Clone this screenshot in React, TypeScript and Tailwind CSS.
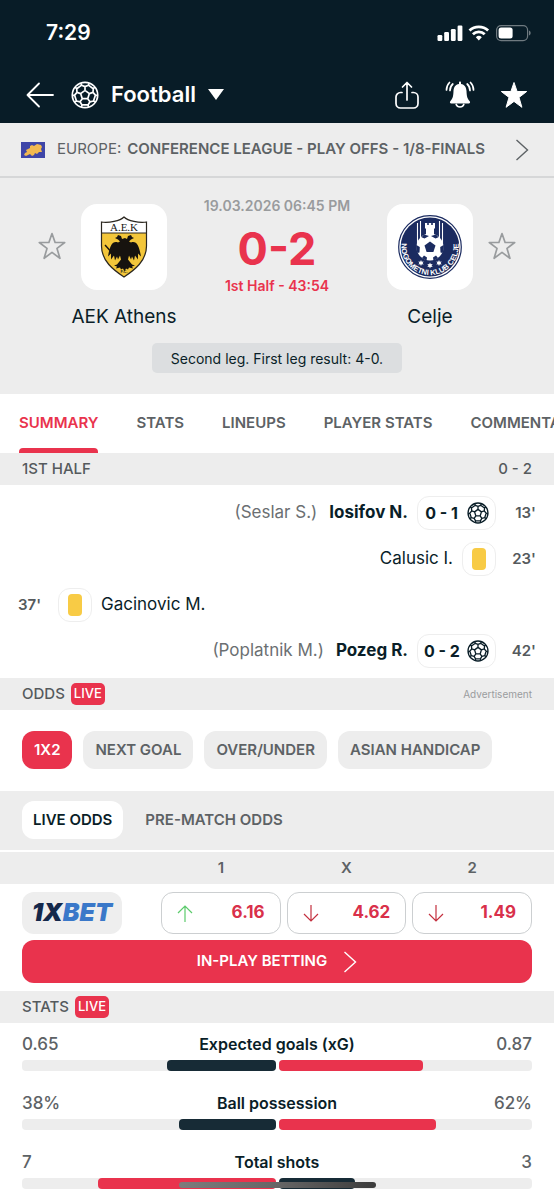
import React from 'react';

const SUMMARY_TABS = ['SUMMARY', 'STATS', 'LINEUPS', 'PLAYER STATS', 'COMMENTARY'];
const MARKETS = ['1X2', 'NEXT GOAL', 'OVER/UNDER', 'ASIAN HANDICAP'];

const ODDS = [
  { label: '1', value: '6.16', up: true },
  { label: 'X', value: '4.62', up: false },
  { label: '2', value: '1.49', up: false },
];

const STATS = [
  { name: 'Expected goals (xG)', home: '0.65', away: '0.87', homePct: 43, awayPct: 57 },
  { name: 'Ball possession', home: '38%', away: '62%', homePct: 38, awayPct: 62 },
  { name: 'Total shots', home: '7', away: '3', homePct: 70, awayPct: 30 },
];

const polar = (r: number, deg: number) => {
  const a = (deg * Math.PI) / 180;
  return `${(14 + r * Math.cos(a)).toFixed(2)} ${(14 + r * Math.sin(a)).toFixed(2)}`;
};

const SEAMS = [-90, -18, 54, 126, 198]
  .map(
    (a) =>
      `M${polar(4.6, a)}L${polar(4.6, a + 72)}M${polar(4.6, a)}L${polar(8.4, a)}` +
      `M${polar(12.6, a - 20)}L${polar(10.4, a - 19)}L${polar(8.4, a)}L${polar(10.4, a + 19)}L${polar(12.6, a + 20)}` +
      `M${polar(10.4, a + 19)}L${polar(10.4, a + 53)}`
  )
  .join('');

const Ball: React.FC<{ className: string }> = ({ className }) => (
  <svg viewBox="0 0 28 28" className={className} fill="none" stroke="currentColor" strokeWidth="1.7" strokeLinejoin="round" aria-hidden="true">
    <circle cx="14" cy="14" r="12.7" />
    <path d={SEAMS} />
  </svg>
);

const Star: React.FC<{ className: string; filled?: boolean }> = ({ className, filled }) => (
  <svg
    viewBox="0 0 28 28"
    className={className}
    fill={filled ? 'currentColor' : 'none'}
    stroke="currentColor"
    strokeWidth={filled ? 1 : 1.7}
    strokeLinejoin="round"
    aria-hidden="true"
  >
    <path d="M14 1.5l3.1 9h9.600l-7.700 5.900 2.900 9.900-7.900-5.900-7.900 5.900L9 16.400 1.300 10.500h9.600z" />
  </svg>
);

const Chevron: React.FC = () => (
  <svg viewBox="0 0 14 22" className="h-[22px] w-[14px]" fill="none" stroke="currentColor" strokeWidth="1.4" aria-hidden="true">
    <path d="M1.5 1l11 10-11 10" />
  </svg>
);

const StatusIcons: React.FC = () => (
  <svg viewBox="0 0 96 18" className="h-[18px] w-24" fill="#fff" aria-hidden="true">
    <rect x="1.5" y="11" width="4.8" height="6" rx="1.2" />
    <rect x="8.2" y="8" width="4.8" height="9" rx="1.2" />
    <rect x="14.900" y="5" width="4.800" height="12" rx="1.200" />
    <rect x="21.600" y="1.500" width="4.800" height="15.500" rx="1.200" />
    <g fill="none" stroke="#fff" strokeWidth="2.8">
      <path d="M33.500 6.500a13.500 13.500 0 0118.600 0" />
      <path d="M36.900 10.200a8.500 8.500 0 0111.800 0" />
    </g>
    <path d="M39.800 13.200a4.500 4.500 0 016 0l-3 3.300z" />
    <rect x="60.600" y="1.600" width="31" height="15" rx="4.500" fill="none" stroke="#6f7a80" strokeWidth="1.200" />
    <rect x="62.600" y="3.600" width="14" height="11" rx="2.500" />
    <path d="M93 6.500v5c2.200-.8 2.200-4.200 0-5z" fill="#6f7a80" />
  </svg>
);

const AekCrest: React.FC = () => (
  <svg viewBox="0 0 48 62" className="h-[62px] w-12" role="img" aria-label="AEK Athens">
    <path d="M24 1C20 5 9 7 1.500 6v24c0 15 12 24 22.500 31 10.500-7 22.500-16 22.500-31V6C39 7 28 5 24 1z" fill="#f3c63a" />
    <path d="M24 1C20 5 9 7 1.500 6v11h45V6C39 7 28 5 24 1z" fill="#fff" />
    <path d="M24 1C20 5 9 7 1.500 6v24c0 15 12 24 22.500 31 10.500-7 22.500-16 22.500-31V6C39 7 28 5 24 1z" fill="none" stroke="#2b2721" strokeWidth="1.200" />
    <path d="M1.500 17h45" stroke="#2b2721" strokeWidth="1" />
    <text x="24" y="15" textAnchor="middle" fontFamily="Liberation Serif, serif" fontSize="11" fill="#1a1815">
      A.E.K
    </text>
    <path
      d="M22 23l-1-3-3-1-1 2-2 1 3 1.500 2 2-2 1c-5-2-8 2-10 14l3-3 0 6 3-4 1 5 2-4 1 3 2-4 1 4-4 5-3 1 3 1-1 2 4-1 1 2 2-1 1.500 3 1.500-3 2 1 1-2 4 1-1-2 3-1-3-1-4-5 1-4 2 4 1-3 2 4 1-5 3 4 0-6 3 3c-2-12-5-16-10-14l-2-1 2-2 3-1.500-2-1-1-2-3 1-1 3-2-1z"
      fill="#17130f"
    />
    <path d="M5 29l9 10" stroke="#17130f" strokeWidth="1.400" />
    <text x="24" y="57" textAnchor="middle" fontFamily="Liberation Sans, sans-serif" fontSize="4" fontWeight="700" fill="#2b2721">
      F.C.
    </text>
  </svg>
);

const CeljeCrest: React.FC = () => (
  <svg viewBox="0 0 64 64" className="h-16 w-16" role="img" aria-label="NK Celje">
    <circle cx="32" cy="32" r="31.300" fill="#fff" stroke="#1b2b60" strokeWidth="1.200" />
    <circle cx="32" cy="32" r="29.400" fill="#1b2b60" />
    <path d="M19.500 8v23M22.500 6v23M41.500 6v23M44.500 8v23" stroke="#fff" strokeWidth="1.100" />
    <path d="M27 8h2.200v2h1.600V8h2.400v2h1.600V8H37v5l-1 1v7h-8v-7l-1-1z" fill="#fff" />
    <circle cx="32" cy="32" r="13.500" fill="#fff" />
    <path d="M32 26.500l5.500 4-2.100 6.500h-6.800l-2.100-6.500zM26 19.500l5 1.500-4.500 2.500-3-1.200zM38 19.500l-5 1.500 4.500 2.500 3-1.200zM18.300 30l3.500 2-.3 5.500-2 .5a14 14 0 01-1.200-8zM45.700 30l-3.500 2 .3 5.500 2 .5a14 14 0 001.200-8zM26 40.500l3 2-.5 3c-1.500-.5-3-1.300-4.500-2.500zM38 40.500l-3 2 .5 3c1.500-.5 3-1.300 4.500-2.500z" fill="#1b2b60" />
    <g fill="#fff">
      <path d="M23 45l.8 1.700 1.900-.2-1.100 1.500 1.100 1.500-1.900-.2L23 51l-.8-1.700-1.900.2 1.100-1.500-1.100-1.500 1.900.2z" />
      <path d="M32 47.500l.8 1.700 1.900-.2-1.100 1.500 1.100 1.500-1.900-.2-.8 1.700-.8-1.700-1.900.2 1.100-1.500-1.100-1.500 1.900.2z" />
      <path d="M41 45l.8 1.700 1.900-.2-1.100 1.500 1.100 1.500-1.900-.2L41 51l-.8-1.700-1.900.2 1.100-1.500-1.100-1.500 1.900.2z" />
    </g>
    <path id="celje-ring" d="M5 22A28.600 28.600 0 1059 22" fill="none" />
    <text fontFamily="Liberation Sans, sans-serif" fontSize="7.500" fontWeight="700" fill="#fff">
      <textPath href="#celje-ring" startOffset="50%" textAnchor="middle">
        NOGOMETNI KLUB CELJE
      </textPath>
    </text>
  </svg>
);

const Flag: React.FC = () => (
  <svg viewBox="0 0 24 16" className="h-4 w-6" aria-hidden="true">
    <rect width="24" height="16" fill="#3f46a8" />
    <path d="M3 13l1-2 2-1-1-2 2-1 2-1 0-2 2-1 2 1 3-2 4 1 1 2-1 2 1 3-3 0-2 2-2-1-1 2-2 1-2-2-2 1-2 1z" fill="#f2b950" />
  </svg>
);

const LiveBadge: React.FC = () => (
  <span className="flex h-[22px] items-center rounded-[5px] bg-[#e9334d] px-[3px] text-[13px] font-medium text-white">LIVE</span>
);

const SectionBar: React.FC<{ children: React.ReactNode }> = ({ children }) => (
  <div className="flex h-8 items-center justify-between bg-[#ededed] px-[22px] text-[15px] font-medium text-[#555a5d]">{children}</div>
);

const Card: React.FC = () => (
  <span className="flex h-[34px] w-[34px] items-center justify-center rounded-xl border border-[#eeeeee]">
    <span className="h-[22px] w-[14px] rounded bg-[#f8cb45]"></span>
  </span>
);

const Goal: React.FC<{ score: string }> = ({ score }) => (
  <span className="flex h-[34px] items-center gap-2 rounded-xl border border-[#eeeeee] px-[6px] text-[16px] font-bold">
    <span className="w-[35px] text-center whitespace-nowrap">{score}</span>
    <Ball className="h-[22px] w-[22px]" />
  </span>
);

const AwayEvent: React.FC<{ minute: string; player: string; assist?: string; score?: string }> = ({ minute, player, assist, score }) => (
  <li className="flex h-[46px] items-center justify-end px-[18px]">
    {assist && <span className="mr-3 text-[#6b6f72]">({assist})</span>}
    <span className={score ? 'font-bold' : ''}>{player}</span>
    <span className="ml-[9px]">{score ? <Goal score={score} /> : <Card />}</span>
    <span className="w-10 text-right text-[15px] font-semibold text-[#555a5d]">{minute}</span>
  </li>
);

const Team: React.FC<{ name: string; children: React.ReactNode }> = ({ name, children }) => (
  <div className="flex w-[86px] flex-col items-center">
    <div className="flex h-[86px] w-[86px] items-center justify-center rounded-2xl bg-white">{children}</div>
    <a href="#team" className="mt-[13px] text-[19px] leading-7 whitespace-nowrap">{name}</a>
  </div>
);

const App: React.FC = () => {
  return (
    <div className="min-h-screen overflow-x-hidden bg-white font-[Inter,'Liberation_Sans',sans-serif] text-[17px] text-[#0a1e28]">
      <header className="bg-[#081c27] text-white">
        <div className="flex h-[66px] items-center justify-between pr-[22px] pl-[46px]">
          <span className="text-[21px] font-semibold">7:29</span>
          <StatusIcons />
        </div>
        <div className="flex h-[57px] items-center justify-between px-[26px]">
          <div className="flex items-center">
            <button aria-label="Back">
              <svg viewBox="0 0 28 26" className="h-[26px] w-7" fill="none" stroke="currentColor" strokeWidth="1.800" strokeLinecap="round" strokeLinejoin="round">
                <path d="M27 13H1.500M13 1.500L1.500 13 13 24.500" />
              </svg>
            </button>
            <button className="ml-[17px] flex items-center text-[22px] font-semibold">
              <Ball className="h-7 w-7" />
              <span className="ml-3">Football</span>
              <svg viewBox="0 0 16 11" className="ml-3 h-[11px] w-4" fill="currentColor" aria-hidden="true">
                <path d="M0 0h16L8 11z" />
              </svg>
            </button>
          </div>
          <div className="flex items-center gap-[25px]">
            <button aria-label="Share">
              <svg viewBox="0 0 26 28" className="h-7 w-[26px]" fill="none" stroke="currentColor" strokeWidth="1.700" strokeLinecap="round" strokeLinejoin="round">
                <path d="M8 11.500H6.500A4.500 4.500 0 002 16v6.500A4.500 4.500 0 006.500 27h13a4.500 4.500 0 004.500-4.500V16a4.500 4.500 0 00-4.500-4.500H18M13 19V1.500M8.500 6L13 1.500 17.500 6" />
              </svg>
            </button>
            <button aria-label="Notifications">
              <svg viewBox="0 0 30 28" className="h-7 w-[30px]" fill="currentColor" aria-hidden="true">
                <path d="M15 .5c.7 0 1 .5 1 1.300V3c3.600.6 5.300 3.400 5.500 7 .2 5.500.8 7.500 3.200 10.200.8 1 .3 2.300-.9 2.300H6.200c-1.200 0-1.700-1.300-.9-2.300C7.700 17.500 8.300 15.500 8.500 10c.2-3.600 1.900-6.400 5.500-7V1.800c0-.8.300-1.300 1-1.300z" />
                <path d="M11.200 23.500a4 3.600 0 007.600 0M7.800 3C5.800 4.800 5 6.800 5 9.500M4.500 1.500C2.500 3.500 1.500 6 1.500 9M22.200 3c2 1.800 2.800 3.800 2.800 6.500M25.500 1.500c2 2 3 4.500 3 7.500" fill="none" stroke="currentColor" strokeWidth="1.700" strokeLinecap="round" />
              </svg>
            </button>
            <button aria-label="Favourite">
              <Star className="h-7 w-7" filled />
            </button>
          </div>
        </div>
      </header>

      <a href="#league" className="flex h-[55px] items-center border-b-2 border-[#d6d7d8] bg-[#ededed] pr-[25px] pl-[21px] text-[15px] text-[#5d6265]">
        <Flag />
        <span className="ml-3">EUROPE:</span>
        <span className="ml-[6px] flex-1 font-semibold whitespace-nowrap">CONFERENCE LEAGUE - PLAY OFFS - 1/8-FINALS</span>
        <Chevron />
      </a>

      <section className="bg-[#ededed] px-[38px] pt-[18px] pb-[21px]">
        <div className="flex items-start justify-between pt-2">
          <div className="flex items-start gap-[15px]">
            <button aria-label="Follow AEK Athens" className="mt-7 text-[#999c9e]">
              <Star className="h-7 w-7" />
            </button>
            <Team name="AEK Athens">
              <AekCrest />
            </Team>
          </div>
          <div className="-mt-2 flex flex-col items-center whitespace-nowrap">
            <time className="text-[14px] leading-5 font-semibold text-[#999b9d]">19.03.2026 06:45 PM</time>
            <span className="mt-2 text-[45px] leading-[50px] font-bold text-[#e9334d]">0-2</span>
            <span className="mt-[2px] text-[14px] leading-5 font-semibold text-[#e9334d]">1st Half - 43:54</span>
          </div>
          <div className="flex items-start gap-[15px]">
            <Team name="Celje">
              <CeljeCrest />
            </Team>
            <button aria-label="Follow Celje" className="mt-7 text-[#999c9e]">
              <Star className="h-7 w-7" />
            </button>
          </div>
        </div>
        <p className="mx-auto mt-3 flex h-[30px] w-fit items-center rounded-[5px] bg-[#dcdee0] px-[19px] text-[14px]">
          Second leg. First leg result: 4-0.
        </p>
      </section>

      <nav className="flex h-[59px] gap-[38px] overflow-hidden px-[19px] text-[15px] font-semibold text-[#5d6265]">
        {SUMMARY_TABS.map((tab, i) => (
          <button
            key={tab}
            className={
              i === 0
                ? 'relative shrink-0 whitespace-nowrap text-[#e9334d] after:absolute after:inset-x-0 after:bottom-0 after:h-[5px] after:rounded-t after:bg-[#e9334d]'
                : 'shrink-0 whitespace-nowrap'
            }
          >
            {tab}
          </button>
        ))}
      </nav>

      <SectionBar>
        <h2>1ST HALF</h2>
        <span>0 - 2</span>
      </SectionBar>
      <ul className="pt-[5px] pb-1">
        <AwayEvent minute="13'" player="Iosifov N." assist="Seslar S." score="0 - 1" />
        <AwayEvent minute="23'" player="Calusic I." />
        <li className="flex h-[46px] items-center px-[18px]">
          <span className="w-10 text-[15px] font-semibold text-[#555a5d]">37'</span>
          <Card />
          <span className="ml-[9px]">Gacinovic M.</span>
        </li>
        <AwayEvent minute="42'" player="Pozeg R." assist="Poplatnik M." score="0 - 2" />
      </ul>

      <SectionBar>
        <div className="flex items-center gap-[6px]">
          <h2>ODDS</h2>
          <LiveBadge />
        </div>
        <span className="text-[10px] font-normal text-[#9a9c9e]">Advertisement</span>
      </SectionBar>
      <div className="flex gap-[11px] px-[22px] pt-[21px] pb-[22px] text-[15px] font-semibold">
        {MARKETS.map((market, i) => (
          <button
            key={market}
            className={
              i === 0
                ? 'h-[38px] rounded-xl bg-[#e9334d] px-3 whitespace-nowrap text-white'
                : 'h-[38px] rounded-xl bg-[#ededed] px-3 whitespace-nowrap text-[#5d6265]'
            }
          >
            {market}
          </button>
        ))}
      </div>

      <div className="flex items-center gap-[11px] border-b-2 border-white bg-[#ededed] px-[22px] pt-[10px] pb-[11px] text-[15px] font-semibold">
        <button className="h-[38px] rounded-xl bg-white px-[11px]">LIVE ODDS</button>
        <button className="h-[38px] px-[11px] text-[#5d6265]">PRE-MATCH ODDS</button>
      </div>

      <div className="grid h-8 grid-cols-[133px_1fr_1fr_1fr] items-center gap-[6px] bg-[#ededed] px-[22px] text-center text-[15px] font-semibold text-[#5d6265]">
        {ODDS.map((odd, i) => (
          <span key={odd.label} className={i === 0 ? 'col-start-2' : ''}>{odd.label}</span>
        ))}
      </div>
      <div className="px-[22px] py-2">
        <div className="grid grid-cols-[133px_1fr_1fr_1fr] gap-[6px]">
          <a href="#1xbet" className="flex h-[42px] w-[100px] items-center justify-center rounded-xl bg-[#eeeeee] text-[25px] font-black text-[#14284b] italic">
            1X<span className="text-[#3a78c9]">BET</span>
          </a>
          {ODDS.map((odd) => (
            <button key={odd.label} className="flex h-[42px] items-center justify-between rounded-xl border border-[#cccfd1] px-[15px] font-bold text-[#d9304a]">
              <svg
                viewBox="0 0 16 17"
                className={odd.up ? 'h-[17px] w-4 text-[#5ccb6c]' : 'h-[17px] w-4 rotate-180 text-[#c4303f]'}
                fill="none"
                stroke="currentColor"
                strokeWidth="1.200"
                aria-hidden="true"
              >
                <path d="M8 17V1M1 8l7-7 7 7" />
              </svg>
              {odd.value}
            </button>
          ))}
        </div>
        <button className="mt-[6px] flex h-[43px] w-full items-center justify-center gap-4 rounded-xl bg-[#e9334d] text-[15px] font-semibold text-white">
          IN-PLAY BETTING
          <Chevron />
        </button>
      </div>

      <SectionBar>
        <div className="flex items-center gap-[6px]">
          <h2>STATS</h2>
          <LiveBadge />
        </div>
      </SectionBar>
      <div className="flex flex-col gap-[21px] px-[22px] py-[10px]">
        {STATS.map((stat) => {
          const homeColor = stat.homePct > stat.awayPct ? 'bg-[#e9334d]' : 'bg-[#172b36]';
          const awayColor = stat.awayPct > stat.homePct ? 'bg-[#e9334d]' : 'bg-[#172b36]';
          return (
            <div key={stat.name}>
              <div className="grid grid-cols-[1fr_auto_1fr] leading-[22px]">
                <span className="font-medium text-[#5d6265]">{stat.home}</span>
                <span className="text-[16px] font-semibold">{stat.name}</span>
                <span className="text-right font-medium text-[#5d6265]">{stat.away}</span>
              </div>
              <div className="mt-[5px] grid grid-cols-2 gap-[3px]">
                <div className="flex h-[11px] justify-end rounded-sm bg-[#ededed]">
                  <div className={`rounded-sm ${homeColor}`} style={{ width: `${stat.homePct}%` }}></div>
                </div>
                <div className="flex h-[11px] rounded-sm bg-[#ededed]">
                  <div className={`rounded-sm ${awayColor}`} style={{ width: `${stat.awayPct}%` }}></div>
                </div>
              </div>
            </div>
          );
        })}
      </div>

      {/* Home indicator */}
      <div className="fixed inset-x-0 bottom-[11px] mx-auto h-[6px] w-[197px] rounded-full bg-linear-to-r from-[#7c7c7c] via-[#666666] to-[#3c3c3c]"></div>
    </div>
  );
};

export default App;
